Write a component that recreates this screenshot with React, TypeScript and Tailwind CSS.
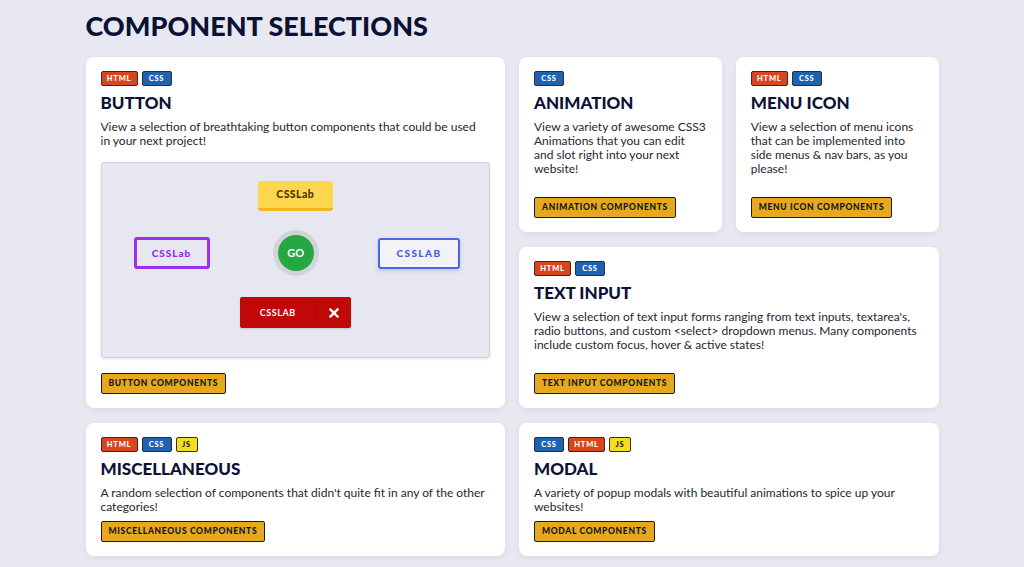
import React from "react";

type Tag = "HTML" | "CSS" | "JS";

const tagCls: Record<Tag, string> = {
  HTML: "bg-[#d8461f] text-white w-[37px]",
  CSS: "bg-[#1f62b0] text-white w-[30px]",
  JS: "bg-[#f6dc1f] text-[#1a1a1a] w-[22px]",
};

function Badges({ tags }: { tags: Tag[] }) {
  return (
    <div className="flex gap-[4px] h-[15px] shrink-0">
      {tags.map((t) => (
        <span
          key={t}
          className={`${tagCls[t]} h-[15px] flex items-center justify-center rounded-[2px] border border-[#3a2a25] text-[7.5px] font-black tracking-[0.1em] leading-none`}
        >
          {t}
        </span>
      ))}
    </div>
  );
}

function LinkBtn({ label }: { label: string }) {
  return (
    <div className="mt-auto flex shrink-0">
      <span className="inline-flex items-center h-[21px] px-[7px] bg-[#e5a81e] border-[1.5px] border-[#1d1d1d] rounded-[2px] text-[8.5px] font-black tracking-[0.08em] text-[#161616] leading-none">
        {label}
      </span>
    </div>
  );
}

function Card({
  tags,
  title,
  desc,
  button,
  className = "",
  children,
}: {
  tags: Tag[];
  title: string;
  desc: React.ReactNode;
  button: string;
  className?: string;
  children?: React.ReactNode;
}) {
  return (
    <div
      className={`bg-white rounded-[8px] shadow-[0_2px_6px_rgba(40,40,80,0.07)] px-[15px] pt-[14px] pb-[14px] flex flex-col ${className}`}
    >
      <Badges tags={tags} />
      <h2 className="mt-[6px] text-[17px] leading-[22px] font-black text-[#0c1236] shrink-0">
        {title}
      </h2>
      <p className="mt-[6px] text-[12px] leading-[14px] text-[#262630] shrink-0">{desc}</p>
      {children}
      <LinkBtn label={button} />
    </div>
  );
}

function Preview() {
  return (
    <div className="mt-[14px] mb-[15px] h-[196px] shrink-0 bg-[#e7e7f1] border border-[#d2d2da] rounded-[3px] shadow-[0_1px_3px_rgba(0,0,0,0.12)] flex flex-col items-center pt-[18px]">
      <div className="w-[75px] h-[30px] bg-[#ffd650] border-b-[3px] border-[#f0b81d] rounded-[3px] flex items-center justify-center text-[10.5px] font-black text-[#4a3800] tracking-[0.04em]">
        CSSLab
      </div>
      <div className="mt-[19px] w-full h-[46px] flex items-center justify-between pl-[32px] pr-[29px]">
        <div className="w-[76px] h-[32px] border-[3px] border-[#9b2ff2] rounded-[3px] flex items-center justify-center text-[10px] font-black text-[#9328ea] tracking-[0.1em]">
          CSSLab
        </div>
        <div className="w-[46px] h-[46px] rounded-full bg-[#d3d3da] flex items-center justify-center ml-[4px]">
          <div className="w-[36px] h-[36px] rounded-full bg-[#27a744] flex items-center justify-center text-white text-[11px] font-bold">
            GO
          </div>
        </div>
        <div className="w-[82px] h-[31px] border-2 border-[#4668e8] bg-[#f2f2f7] rounded-[3px] shadow-[0_2px_4px_rgba(60,80,160,0.2)] flex items-center justify-center text-[10px] font-black text-[#3c5de2] tracking-[0.14em]">
          CSSLAB
        </div>
      </div>
      <div className="mt-[21px] w-[111px] h-[31px] bg-[#c00808] rounded-[2px] flex items-center text-white shadow-[0_1px_2px_rgba(0,0,0,0.15)]">
        <div className="w-[76px] text-center text-[9px] font-bold tracking-[0.06em]">CSSLAB</div>
        <div className="w-px h-[21px] bg-[#b30707]" />
        <div className="flex-1 flex items-center justify-center">
          <svg width="10" height="10" viewBox="0 0 10 10">
            <path d="M1.5 1.5 L8.5 8.5 M8.5 1.5 L1.5 8.5" stroke="white" strokeWidth="2.4" strokeLinecap="square" />
          </svg>
        </div>
      </div>
    </div>
  );
}

export default function App() {
  return (
    <div className="min-h-screen bg-[#e8e8f2] font-['Lato',sans-serif]">
      <div className="w-[853px] mx-auto pt-[9px] pb-[20px]">
        <h1 className="text-[27px] leading-[34px] font-black text-[#0b1133]">
          COMPONENT SELECTIONS
        </h1>
        <div className="mt-[14px] grid grid-cols-4 gap-x-[14px] gap-y-[15px] grid-rows-[175px_161px_133px]">
          <Card
            className="col-span-2 row-span-2"
            tags={["HTML", "CSS"]}
            title="BUTTON"
            desc={
              <>
                View a selection of breathtaking button components that could be used
                <br />
                in your next project!
              </>
            }
            button="BUTTON COMPONENTS"
          >
            <Preview />
          </Card>
          <Card
            tags={["CSS"]}
            title="ANIMATION"
            desc="View a variety of awesome CSS3 Animations that you can edit and slot right into your next website!"
            button="ANIMATION COMPONENTS"
          />
          <Card
            tags={["HTML", "CSS"]}
            title="MENU ICON"
            desc="View a selection of menu icons that can be implemented into side menus & nav bars, as you please!"
            button="MENU ICON COMPONENTS"
          />
          <Card
            className="col-span-2"
            tags={["HTML", "CSS"]}
            title="TEXT INPUT"
            desc="View a selection of text input forms ranging from text inputs, textarea's, radio buttons, and custom <select> dropdown menus. Many components include custom focus, hover & active states!"
            button="TEXT INPUT COMPONENTS"
          />
          <Card
            className="col-span-2"
            tags={["HTML", "CSS", "JS"]}
            title="MISCELLANEOUS"
            desc="A random selection of components that didn't quite fit in any of the other categories!"
            button="MISCELLANEOUS COMPONENTS"
          />
          <Card
            className="col-span-2"
            tags={["CSS", "HTML", "JS"]}
            title="MODAL"
            desc="A variety of popup modals with beautiful animations to spice up your websites!"
            button="MODAL COMPONENTS"
          />
        </div>
      </div>
    </div>
  );
}
